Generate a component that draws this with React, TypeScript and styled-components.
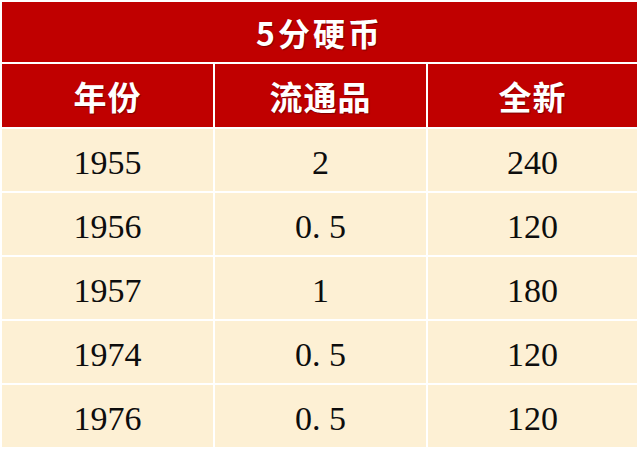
import { Fragment } from 'react';
import styled, { createGlobalStyle } from 'styled-components';

const GlobalStyle = createGlobalStyle`
  html, body {
    margin: 0;
    padding: 0;
    background: #ffffff;
  }
`;

const Table = styled.div`
  width: 635px;
  margin: 2px 3px 0 2px;
  display: grid;
  grid-template-columns: 211px 211px 209px;
  grid-template-rows: 60px 63px repeat(5, 62px);
  gap: 2px;
  background: #ffffff;
`;

const TitleCell = styled.div`
  grid-column: 1 / -1;
  background: #c00000;
  color: #ffffff;
  display: flex;
  align-items: center;
  justify-content: center;
  font-family: "Noto Sans CJK SC", sans-serif;
  font-weight: 700;
  font-size: 32px;
  letter-spacing: 3px;
  text-shadow: 1px 1px 1px rgba(80, 0, 0, 0.6);
`;

const HeadCell = styled.div`
  background: #c00000;
  color: #ffffff;
  display: flex;
  align-items: center;
  justify-content: center;
  font-family: "Noto Sans CJK SC", sans-serif;
  font-weight: 700;
  font-size: 33px;
  letter-spacing: 1px;
  text-shadow: 1px 1px 1px rgba(80, 0, 0, 0.6);
`;

const DataCell = styled.div`
  background: #fdf0d4;
  color: #0d0d0d;
  display: flex;
  align-items: center;
  justify-content: center;
  padding-top: 6px;
  font-family: "Liberation Serif", serif;
  font-size: 34px;
`;

const Dot = styled.span`
  display: inline-block;
  width: 0.5em;
`;

const rows = [
  ['1955', '2', '240'],
  ['1956', '0.5', '120'],
  ['1957', '1', '180'],
  ['1974', '0.5', '120'],
  ['1976', '0.5', '120'],
];

function Num({ value }: { value: string }) {
  const [a, b] = value.split('.');
  if (b === undefined) return <>{value}</>;
  return (
    <>
      {a}
      <Dot>.</Dot>
      {b}
    </>
  );
}

export default function App() {
  return (
    <>
      <GlobalStyle />
      <Table>
        <TitleCell>5分硬币</TitleCell>
        <HeadCell>年份</HeadCell>
        <HeadCell>流通品</HeadCell>
        <HeadCell>全新</HeadCell>
        {rows.map((r) => (
          <Fragment key={r[0]}>
            {r.map((v, i) => (
              <DataCell key={i}>
                <Num value={v} />
              </DataCell>
            ))}
          </Fragment>
        ))}
      </Table>
    </>
  );
}
